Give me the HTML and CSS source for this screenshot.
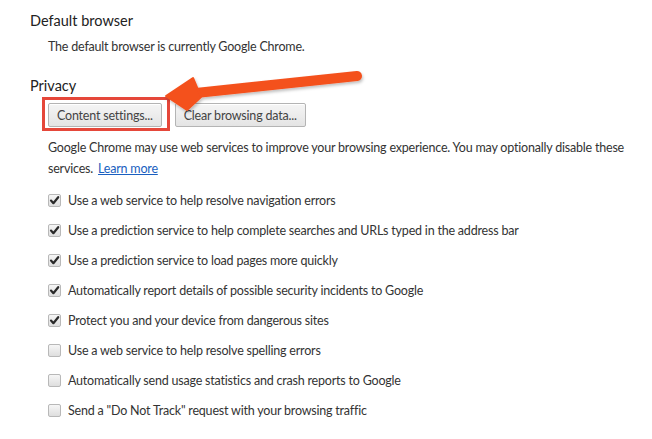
FILE: index.html
```html
<!DOCTYPE html>
<html>
<head>
<meta charset="utf-8">
<link rel="stylesheet" href="styles.css">
</head>
<body>
<div class="page">
  <section class="section">
    <h3 class="section-title">Default browser</h3>
    <div class="section-body">
      <p class="note">The default browser is currently Google Chrome.</p>
    </div>
  </section>
  <section class="section privacy">
    <h3 class="section-title">Privacy</h3>
    <div class="section-body">
      <div class="buttons">
        <button class="btn highlighted">Content settings...</button>
        <button class="btn">Clear browsing data...</button>
      </div>
      <p class="desc">Google Chrome may use web services to improve your browsing experience. You may optionally disable these services. <a class="link" href="#">Learn more</a></p>
      <ul class="options">
        <li class="option"><span class="cb checked"><svg viewBox="0 0 13 13" width="13" height="13"><path d="M3 6.6 L5.4 9.2 L10.2 3.2" fill="none" stroke="#2b2b2b" stroke-width="2.2" stroke-linecap="round" stroke-linejoin="round"/></svg></span><span>Use a web service to help resolve navigation errors</span></li>
        <li class="option"><span class="cb checked"><svg viewBox="0 0 13 13" width="13" height="13"><path d="M3 6.6 L5.4 9.2 L10.2 3.2" fill="none" stroke="#2b2b2b" stroke-width="2.2" stroke-linecap="round" stroke-linejoin="round"/></svg></span><span>Use a prediction service to help complete searches and URLs typed in the address bar</span></li>
        <li class="option"><span class="cb checked"><svg viewBox="0 0 13 13" width="13" height="13"><path d="M3 6.6 L5.4 9.2 L10.2 3.2" fill="none" stroke="#2b2b2b" stroke-width="2.2" stroke-linecap="round" stroke-linejoin="round"/></svg></span><span>Use a prediction service to load pages more quickly</span></li>
        <li class="option"><span class="cb checked"><svg viewBox="0 0 13 13" width="13" height="13"><path d="M3 6.6 L5.4 9.2 L10.2 3.2" fill="none" stroke="#2b2b2b" stroke-width="2.2" stroke-linecap="round" stroke-linejoin="round"/></svg></span><span>Automatically report details of possible security incidents to Google</span></li>
        <li class="option"><span class="cb checked"><svg viewBox="0 0 13 13" width="13" height="13"><path d="M3 6.6 L5.4 9.2 L10.2 3.2" fill="none" stroke="#2b2b2b" stroke-width="2.2" stroke-linecap="round" stroke-linejoin="round"/></svg></span><span>Protect you and your device from dangerous sites</span></li>
        <li class="option"><span class="cb"></span><span>Use a web service to help resolve spelling errors</span></li>
        <li class="option"><span class="cb"></span><span>Automatically send usage statistics and crash reports to Google</span></li>
        <li class="option"><span class="cb"></span><span>Send a "Do Not Track" request with your browsing traffic</span></li>
      </ul>
    </div>
  </section>
  <svg class="arrow" width="652" height="140" viewBox="0 0 652 140">
    <defs>
      <filter id="sh" x="-10%" y="-30%" width="120%" height="160%">
        <feDropShadow dx="1" dy="2" stdDeviation="1.5" flood-color="#000" flood-opacity="0.25"/>
      </filter>
    </defs>
    <g filter="url(#sh)">
      <line x1="196" y1="93" x2="357" y2="76" stroke="#f4511e" stroke-width="10" stroke-linecap="round"/>
      <path d="M166 96 L193 78 L201 97 L187 110 Z" fill="#f4511e" stroke="#f4511e" stroke-width="2" stroke-linejoin="round"/>
    </g>
  </svg>
</div>
</body>
</html>
```

FILE: styles.css
```css
html, body {
  margin: 0;
  padding: 0;
  background: #fff;
}

body {
  font-family: Lato, "Noto Sans", sans-serif;
  font-size: 12.5px;
  letter-spacing: -0.2px;
  color: #333;
}

.page {
  position: relative;
  width: 652px;
  height: 439px;
  overflow: hidden;
  padding: 11px 0 0 30px;
  box-sizing: border-box;
}

.section-title {
  margin: 0;
  font-size: 14.5px;
  font-weight: normal;
  letter-spacing: 0;
  line-height: 20px;
  color: #222;
}

.section-body {
  padding-left: 18px;
}

.note {
  margin: 6px 0 0;
  line-height: 20px;
}

.privacy {
  margin-top: 19px;
}

.buttons {
  display: flex;
  gap: 13px;
  margin-top: 7px;
}

.btn {
  position: relative;
  height: 24px;
  padding: 0 8px;
  font-family: inherit;
  font-size: 12.5px;
  letter-spacing: -0.2px;
  color: #444;
  background: linear-gradient(#f5f5f5, #e4e4e4);
  border: 1px solid #b4b4b4;
  border-radius: 2px;
  box-shadow: inset 0 1px 0 #fff;
}

.btn.highlighted::after {
  content: "";
  position: absolute;
  left: -7px;
  right: -9px;
  top: -7px;
  bottom: -5px;
  border: 3px solid #e5473a;
}

.desc {
  margin: 10px 0 0;
  line-height: 21px;
  padding-right: 10px;
}

.link {
  margin-left: 2px;
  color: #1a5fc0;
  text-decoration: underline;
}

.options {
  list-style: none;
  margin: 6px 0 0;
  padding: 0;
}

.option {
  display: flex;
  align-items: center;
  gap: 7px;
  height: 30px;
}

.cb {
  display: inline-flex;
  width: 11px;
  height: 11px;
  border: 1px solid #b8b8b8;
  border-radius: 2px;
  background: linear-gradient(#f6f6f6, #dedede);
  position: relative;
  flex: none;
}

.cb svg {
  position: absolute;
  left: -1px;
  top: -1px;
}

.arrow {
  position: absolute;
  left: 0;
  top: 0;
  pointer-events: none;
}
```
